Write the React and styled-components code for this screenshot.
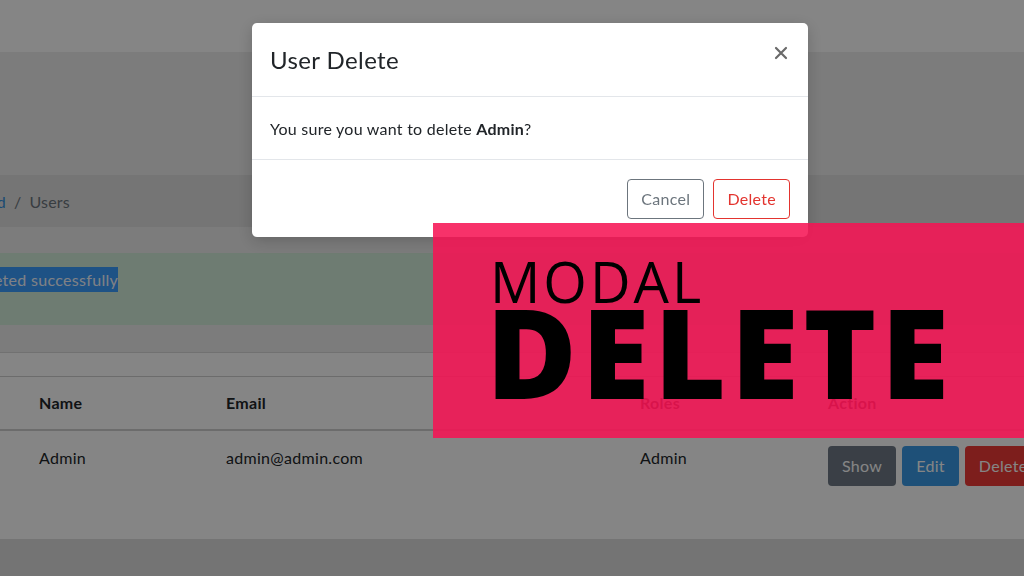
import React from "react";
import styled, { createGlobalStyle } from "styled-components";

const GlobalStyle = createGlobalStyle`
  html, body { margin: 0; padding: 0; }
  body {
    width: 1024px;
    height: 576px;
    overflow: hidden;
    font-family: Lato, "Noto Sans", sans-serif;
    color: #212529;
    background: #dedede;
  }
`;

const Page = styled.div`
  position: relative;
  width: 1024px;
  height: 576px;
  overflow: hidden;
  background: #eeeeee;
  display: flex;
  flex-direction: column;
`;

const Navbar = styled.header`
  height: 52px;
  flex: none;
  background: #ffffff;
`;

const Main = styled.main`
  flex: 1;
  display: flex;
  flex-direction: column;
  padding-top: 123px;
  margin-left: -80px;
  width: 1200px;
`;

const Breadcrumb = styled.nav`
  height: 52px;
  background: #e0e0e0;
  display: flex;
  align-items: center;
  padding: 0 8px;
  font-size: 16px;
  letter-spacing: 0.2px;
  color: #6c757d;
  gap: 8px;
`;

const Crumb = styled.span`
  color: ${(p) => (p.$link ? "#3490dc" : "#6c757d")};
`;

const Alert = styled.div`
  margin-top: 26px;
  height: 72px;
  box-sizing: border-box;
  background: #d4edda;
  color: #155724;
  padding: 17px 14px;
  font-size: 16px;
  letter-spacing: 0.3px;
`;

const Highlight = styled.span`
  background: #3b9dff;
  color: #f4f8ff;
  padding: 3px 0;
`;

const Card = styled.section`
  margin-top: 27px;
  background: #ffffff;
  border-top: 1px solid #d8d8d8;
  padding-top: 23px;
  height: 187px;
  box-sizing: border-box;
  box-shadow: 0 6px 8px rgba(0, 0, 0, 0.12);
`;

const Table = styled.table`
  border-collapse: collapse;
  table-layout: fixed;
  width: 1180px;
  font-size: 16px;
  letter-spacing: 0.3px;
  border-top: 1px solid #cfcfcf;
`;

const Th = styled.th`
  text-align: left;
  font-weight: 700;
  color: #212529;
  height: 53px;
  padding: 0 12px;
  border-bottom: 2px solid #cfcfcf;
  box-sizing: border-box;
  width: ${(p) => (p.$w ? `${p.$w}px` : "auto")};
`;

const Td = styled.td`
  padding: 17px 12px 12px;
  vertical-align: top;
  color: #212529;
`;

const Actions = styled.div`
  display: flex;
  gap: 6px;
  margin-top: -2px;
`;

const ActionButton = styled.button`
  font-family: inherit;
  font-size: 16px;
  letter-spacing: 0.3px;
  height: 40px;
  padding: 0 14px;
  border: none;
  border-radius: 4px;
  color: #ffffff;
  background: ${(p) => p.$bg};
`;

const Footer = styled.footer`
  flex: 1;
  background: #dedede;
`;

const Backdrop = styled.div`
  position: fixed;
  inset: 0;
  background: rgba(0, 0, 0, 0.48);
`;

const Modal = styled.div`
  position: fixed;
  left: 252px;
  top: 23px;
  width: 556px;
  background: #ffffff;
  border-radius: 5px;
  box-shadow: 0 4px 16px rgba(0, 0, 0, 0.2);
  display: flex;
  flex-direction: column;
`;

const ModalHeader = styled.div`
  height: 74px;
  box-sizing: border-box;
  border-bottom: 1px solid #e3e6ea;
  display: flex;
  align-items: center;
  justify-content: space-between;
  padding: 0 17px 0 18px;
`;

const ModalTitle = styled.h5`
  margin: 0;
  font-size: 24px;
  font-weight: 400;
  letter-spacing: 0.4px;
  color: #212529;
`;

const Close = styled.button`
  border: none;
  background: none;
  padding: 0;
  margin-top: -14px;
  width: 20px;
  height: 20px;
  display: flex;
  align-items: center;
  justify-content: center;
`;

const ModalBody = styled.div`
  height: 63px;
  box-sizing: border-box;
  border-bottom: 1px solid #e3e6ea;
  display: flex;
  align-items: center;
  padding: 0 18px;
  font-size: 16px;
  letter-spacing: 0.25px;
  color: #212529;
`;

const ModalFooter = styled.div`
  height: 77px;
  box-sizing: border-box;
  display: flex;
  justify-content: flex-end;
  align-items: center;
  gap: 9px;
  padding: 0 18px 0 0;
`;

const OutlineButton = styled.button`
  font-family: inherit;
  font-size: 16px;
  letter-spacing: 0.3px;
  height: 40px;
  padding: 0 ${(p) => p.$px}px;
  background: #ffffff;
  border-radius: 4px;
  border: 1px solid ${(p) => p.$color};
  color: ${(p) => p.$color};
`;

const Banner = styled.div`
  position: fixed;
  left: 433px;
  top: 223px;
  right: 0;
  height: 215px;
  background: rgba(246, 19, 84, 0.87);
  display: flex;
  flex-direction: column;
  padding: 30px 0 0 57px;
  box-sizing: border-box;
  color: #000000;
  font-family: "Open Sans", "Noto Sans", sans-serif;
`;

const BannerSmall = styled.div`
  font-size: 56px;
  font-weight: 400;
  line-height: 56px;
  letter-spacing: 3px;
`;

const BannerBig = styled.div`
  font-size: 124px;
  font-weight: 800;
  line-height: 100px;
  letter-spacing: 4.5px;
  margin-left: -4px;
  margin-top: -8px;
`;

export default function App() {
  return (
    <>
      <GlobalStyle />
      <Page>
        <Navbar />
        <Main>
          <Breadcrumb>
            <Crumb $link>Dashboard</Crumb>
            <Crumb>/</Crumb>
            <Crumb>Users</Crumb>
          </Breadcrumb>
          <Alert>
            <Highlight>User deleted successfully</Highlight>
          </Alert>
          <Card>
            <Table>
              <thead>
                <tr>
                  <Th $w={107}>No</Th>
                  <Th $w={187}>Name</Th>
                  <Th $w={414}>Email</Th>
                  <Th $w={188}>Roles</Th>
                  <Th>Action</Th>
                </tr>
              </thead>
              <tbody>
                <tr>
                  <Td>1</Td>
                  <Td>Admin</Td>
                  <Td>admin@admin.com</Td>
                  <Td>Admin</Td>
                  <Td>
                    <Actions>
                      <ActionButton $bg="#6f7a86">Show</ActionButton>
                      <ActionButton $bg="#3a9ae6">Edit</ActionButton>
                      <ActionButton $bg="#f03a36">Delete</ActionButton>
                    </Actions>
                  </Td>
                </tr>
              </tbody>
            </Table>
          </Card>
        </Main>
        <Footer />
      </Page>
      <Backdrop />
      <Modal>
        <ModalHeader>
          <ModalTitle>User Delete</ModalTitle>
          <Close aria-label="Close">
            <svg width="14" height="14" viewBox="0 0 14 14">
              <path d="M2 2 L12 12 M12 2 L2 12" stroke="#6a6a6a" strokeWidth="2.2" strokeLinecap="round" />
            </svg>
          </Close>
        </ModalHeader>
        <ModalBody>
          <span>
            You sure you want to delete <b>Admin</b>?
          </span>
        </ModalBody>
        <ModalFooter>
          <OutlineButton $color="#6c757d" $px={13}>Cancel</OutlineButton>
          <OutlineButton $color="#e3342f" $px={13}>Delete</OutlineButton>
        </ModalFooter>
      </Modal>
      <Banner>
        <BannerSmall>MODAL</BannerSmall>
        <BannerBig>DELETE</BannerBig>
      </Banner>
    </>
  );
}
